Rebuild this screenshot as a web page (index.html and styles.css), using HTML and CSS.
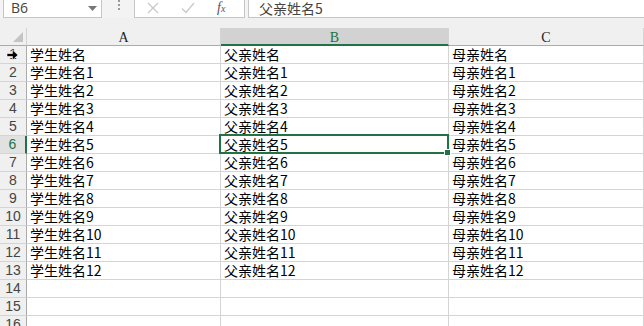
FILE: index.html
```html
<!DOCTYPE html>
<html lang="zh">
<head>
  <meta charset="UTF-8">
  <title>Sheet</title>
  <link rel="stylesheet" href="styles.css">
</head>
<body>

  <div class="formula-bar">
    <div class="name-box">
      <span>B6</span>
      <svg class="drop" width="9" height="5" viewBox="0 0 9 5"><path d="M0 0h9L4.5 5z" fill="#777"/></svg>
    </div>
    <div class="grip"></div>
    <div class="fx-buttons">
      <svg class="fx-icon" width="12" height="12" viewBox="0 0 12 12"><path d="M1 1L11 11M11 1L1 11" stroke="#c8c8c8" stroke-width="1.3" fill="none"/></svg>
      <svg class="fx-icon" width="14" height="12" viewBox="0 0 14 12"><path d="M1 6.5L5 10.5L13 1" stroke="#c8c8c8" stroke-width="1.3" fill="none"/></svg>
      <span class="fx-btn fx"><i>f</i><small>x</small></span>
    </div>
    <div class="formula-input">父亲姓名5</div>
  </div>

  <div class="strip"></div>

  <div class="sheet" id="sheet">
    <div class="corner"><svg width="10" height="10" viewBox="0 0 10 10"><path d="M10 0V10H0z" fill="#c4c4c4"/></svg></div>
    <div class="col-head">A</div>
    <div class="col-head active">B</div>
    <div class="col-head">C</div>
  </div>

  <script>
    const sheet = document.getElementById('sheet');
    const rows = [['学生姓名', '父亲姓名', '母亲姓名']];
    for (let i = 1; i <= 12; i++) {
      rows.push(['学生姓名' + i, '父亲姓名' + i, '母亲姓名' + i]);
    }
    rows.push(['', '', ''], ['', '', ''], ['', '', '']);

    rows.forEach((row, idx) => {
      const n = idx + 1;
      const head = document.createElement('div');
      head.className = 'row-head' + (n === 6 ? ' active' : '');
      head.textContent = n;
      if (n === 1) {
        head.innerHTML = '1<svg class="cursor" width="11" height="10" viewBox="0 0 11 10"><path d="M0 3.5h5.5V0L11 5 5.5 10V6.5H0z" fill="#000" stroke="#fff" stroke-width="0.6"/></svg>';
      }
      sheet.appendChild(head);

      row.forEach((text, c) => {
        const cell = document.createElement('div');
        cell.className = 'cell';
        if (n === 6 && c === 1) cell.classList.add('selected');
        cell.textContent = text;
        sheet.appendChild(cell);
      });
    });
  </script>

</body>
</html>
```

FILE: styles.css
```css
body {
  margin: 0;
  width: 644px;
  height: 326px;
  overflow: hidden;
  background-color: #fff;
  font-family: "Noto Sans CJK SC", sans-serif;
}

.formula-bar {
  display: flex;
  align-items: stretch;
  height: 18px;
  background-color: #f3f3f3;
}

.name-box {
  display: flex;
  align-items: flex-start;
  justify-content: space-between;
  width: 99px;
  margin-left: 3px;
  padding: 0 4px 0 7px;
  box-sizing: border-box;
  background-color: #fff;
  border: 1px solid #c6c6c6;
  border-top: none;
  font-family: "Open Sans", sans-serif;
  font-size: 14px;
  color: #444;
  line-height: 16px;
}

.name-box .drop {
  margin-top: 6px;
}

.grip {
  width: 2px;
  margin: 0 14px 0 16px;
  background-image: linear-gradient(#999 50%, transparent 50%);
  background-size: 2px 4px;
  height: 12px;
}

.fx-buttons {
  display: flex;
  align-items: flex-start;
  width: 111px;
  box-sizing: border-box;
  background-color: #fff;
  border: 1px solid #c6c6c6;
  border-top: none;
  padding-left: 12px;
  gap: 22px;
}

.fx-icon {
  margin-top: 2px;
}

.fx-btn {
  font-family: "Liberation Serif", serif;
  line-height: 16px;
}

.fx-btn.fx {
  color: #555;
  font-size: 14px;
}

.fx-btn.fx small {
  font-size: 10px;
  font-style: italic;
}

.formula-input {
  flex: 1;
  margin-left: 3px;
  padding-left: 10px;
  background-color: #fff;
  border-left: 1px solid #c6c6c6;
  border-bottom: 1px solid #c6c6c6;
  font-size: 14px;
  color: #444;
  line-height: 16px;
  overflow: hidden;
}

.strip {
  height: 10px;
  background-color: #f0f0f0;
}

.sheet {
  display: grid;
  grid-template-columns: 27px 194px 228px 195px;
  grid-auto-rows: 18px;
}

.corner {
  display: flex;
  align-items: flex-end;
  justify-content: flex-end;
  padding: 0 3px 3px 0;
  background-color: #f0f0f0;
  border-right: 1px solid #d4d4d4;
  border-bottom: 1px solid #ababab;
}

.col-head {
  background-color: #f0f0f0;
  border-right: 1px solid #d4d4d4;
  border-bottom: 1px solid #ababab;
  text-align: center;
  font-family: "Liberation Serif", serif;
  font-size: 14px;
  line-height: 19px;
  color: #222;
}

.col-head.active {
  background-color: #d2d2d2;
  color: #217346;
  border-bottom: 2px solid #217346;
}

.row-head {
  position: relative;
  background-color: #f0f0f0;
  border-right: 1px solid #ababab;
  border-bottom: 1px solid #d4d4d4;
  text-align: center;
  font-family: "Liberation Sans", sans-serif;
  font-size: 14px;
  line-height: 17px;
  color: #444;
}

.row-head.active {
  background-color: #e1e1e1;
  color: #217346;
  border-right: 2px solid #217346;
}

.cursor {
  position: absolute;
  left: 7px;
  top: 4px;
}

.cell {
  position: relative;
  padding-left: 3px;
  border-right: 1px solid #d4d4d4;
  border-bottom: 1px solid #d4d4d4;
  font-size: 14px;
  line-height: 17px;
  color: #000;
  white-space: nowrap;
}

.cell.selected::after {
  content: "";
  position: absolute;
  left: -2px;
  top: -2px;
  right: -1px;
  bottom: -1px;
  border: 2px solid #217346;
}

.cell.selected::before {
  content: "";
  position: absolute;
  right: -3px;
  bottom: -3px;
  width: 5px;
  height: 5px;
  background-color: #217346;
  border: 1px solid #fff;
  z-index: 1;
}
```
